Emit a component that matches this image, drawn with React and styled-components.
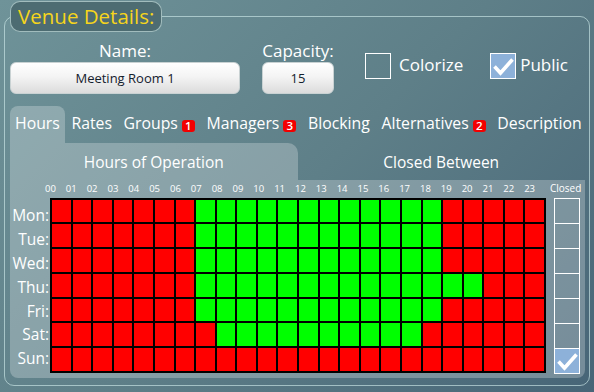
import React from "react";
import styled, { createGlobalStyle } from "styled-components";

const GlobalStyle = createGlobalStyle`
  html, body { margin: 0; padding: 0; height: 100%; }
  body {
    background: linear-gradient(135deg, #6f9399 0%, #5e7f88 50%, #476577 100%);
    font-family: "Open Sans", "Noto Sans", sans-serif;
    color: #fff;
    overflow: hidden;
  }
  #root { height: 100%; }
`;

const OVERLAY = "rgba(255,255,255,0.25)";

const Frame = styled.fieldset`
  margin: 1px 4px 0;
  padding: 8px 4px 7px 5px;
  border: 1px solid rgba(205, 232, 232, 0.65);
  border-radius: 10px;
  min-inline-size: 0;
`;

const Legend = styled.legend`
  margin: 0;
  padding: 0 7px;
  height: 31px;
  box-sizing: border-box;
  line-height: 29px;
  font-size: 20.5px;
  color: #f6d51c;
  background: #4d6c72;
  border: 1px solid rgba(190, 215, 215, 0.75);
  border-radius: 10px;
`;

const HeaderRow = styled.div`
  display: flex;
  align-items: flex-start;
`;

const FieldGroup = styled.div`
  display: flex;
  flex-direction: column;
  align-items: center;
  width: ${(p) => p.$width}px;
  margin-left: ${(p) => p.$offset || 0}px;
`;

const FieldLabel = styled.div`
  font-size: 17px;
  line-height: 22px;
  white-space: nowrap;
`;

const TextInput = styled.div`
  box-sizing: border-box;
  width: 100%;
  height: 32px;
  border-radius: 6px;
  border: 1px solid #c9d2d3;
  background: linear-gradient(#ffffff 0%, #f4f4f4 45%, #dcdcdc 100%);
  color: #13202c;
  font-size: 13px;
  display: flex;
  align-items: center;
  justify-content: center;
`;

const CheckField = styled.div`
  display: flex;
  align-items: center;
  margin-top: 13px;
  margin-left: ${(p) => p.$offset}px;
`;

const CheckBox = styled.div`
  box-sizing: border-box;
  width: 26px;
  height: 26px;
  border: 1px solid #ffffff;
  background: ${(p) => (p.$checked ? "#8db1d9" : "transparent")};
  display: flex;
  align-items: center;
  justify-content: center;
`;

const CheckText = styled.span`
  font-size: 17px;
  line-height: 22px;
  margin-left: ${(p) => p.$gap}px;
  margin-top: -3px;
`;

const Tabs = styled.div`
  display: flex;
  margin-top: 12px;
  height: 37px;
`;

const Tab = styled.div`
  display: flex;
  align-items: flex-start;
  padding: 0 5px;
  margin-right: 1.6px;
  font-size: 15.8px;
  line-height: 34px;
  white-space: nowrap;
  border-radius: 8px 8px 0 0;
  background: ${(p) => (p.$active ? OVERLAY : "transparent")};
`;

const Badge = styled.span`
  display: inline-block;
  margin-left: 4px;
  margin-top: 14px;
  width: 13px;
  height: 12px;
  line-height: 12px;
  border-radius: 3px;
  background: #f20000;
  color: #fff;
  font-size: 11.5px;
  font-weight: 600;
  text-align: center;
`;

const Panel = styled.div`
  width: 575px;
`;

const SubTabs = styled.div`
  display: flex;
  height: 37px;
`;

const SubTab = styled.div`
  flex: 1;
  display: flex;
  align-items: center;
  justify-content: center;
  font-size: 15.5px;
  border-radius: 0 10px 0 0;
  background: ${(p) => (p.$active ? OVERLAY : "transparent")};
`;

const GridArea = styled.div`
  display: flex;
  align-items: flex-start;
  padding-bottom: 4px;
  background: ${OVERLAY};
  border-radius: 0 0 8px 8px;
`;

const DayCol = styled.div`
  width: 40px;
  box-sizing: border-box;
  padding-top: 24px;
  padding-right: 1px;
  display: flex;
  flex-direction: column;
  align-items: flex-end;
`;

const DayLabel = styled.div`
  height: 23.9px;
  line-height: 23.9px;
  font-size: 15.5px;
`;

const ScheduleCol = styled.div`
  width: 496px;
`;

const HourRow = styled.div`
  display: grid;
  grid-template-columns: repeat(24, 1fr);
  width: 500px;
  margin-left: -10px;
  height: 17.7px;
`;

const HourLabel = styled.div`
  font-size: 9.5px;
  line-height: 17px;
  text-align: center;
`;

const Grid = styled.div`
  display: grid;
  grid-template-columns: repeat(24, 1fr);
  grid-template-rows: repeat(7, 1fr);
  gap: 2px;
  padding: 2px;
  height: 175px;
  box-sizing: border-box;
  background: #000;
`;

const Cell = styled.div`
  background: ${(p) => (p.$open ? "#00ff00" : "#ff0000")};
`;

const ClosedCol = styled.div`
  width: 30px;
  margin-left: 4px;
  display: flex;
  flex-direction: column;
  align-items: flex-end;
`;

const ClosedLabel = styled.div`
  width: 30px;
  height: 18px;
  line-height: 17px;
  font-size: 10px;
  text-align: center;
`;

const ClosedBox = styled.div`
  box-sizing: border-box;
  width: 26px;
  height: 26px;
  border: 1px solid #ffffff;
  margin-top: ${(p) => (p.$first ? 0 : -1)}px;
  background: ${(p) => (p.$checked ? "#8db1d9" : "transparent")};
  display: flex;
  align-items: center;
  justify-content: center;
`;

const Check = () => (
  <svg width="24" height="24" viewBox="0 0 24 24">
    <polyline
      points="3.5,12.5 9.5,19 21.5,5.5"
      fill="none"
      stroke="#ffffff"
      strokeWidth="3.6"
      strokeLinejoin="miter"
      strokeLinecap="butt"
    />
  </svg>
);

const days = ["Mon:", "Tue:", "Wed:", "Thu:", "Fri:", "Sat:", "Sun:"];
const schedule = [[7, 18], [7, 18], [7, 18], [7, 20], [7, 18], [8, 17], null];
const closed = [false, false, false, false, false, false, true];
const hours = Array.from({ length: 24 }, (_, i) => String(i).padStart(2, "0"));

const tabs = [
  { label: "Hours", active: true },
  { label: "Rates" },
  { label: "Groups", badge: 1 },
  { label: "Managers", badge: 3 },
  { label: "Blocking" },
  { label: "Alternatives", badge: 2 },
  { label: "Description" },
];

export default function App() {
  return (
    <>
      <GlobalStyle />
      <Frame>
        <Legend>Venue Details:</Legend>
        <HeaderRow>
          <FieldGroup $width={230}>
            <FieldLabel>Name:</FieldLabel>
            <TextInput>Meeting Room 1</TextInput>
          </FieldGroup>
          <FieldGroup $width={72} $offset={22}>
            <FieldLabel>Capacity:</FieldLabel>
            <TextInput>15</TextInput>
          </FieldGroup>
          <CheckField $offset={31}>
            <CheckBox />
            <CheckText $gap={8}>Colorize</CheckText>
          </CheckField>
          <CheckField $offset={27}>
            <CheckBox $checked>
              <Check />
            </CheckBox>
            <CheckText $gap={4}>Public</CheckText>
          </CheckField>
        </HeaderRow>
        <Tabs>
          {tabs.map((t) => (
            <Tab key={t.label} $active={t.active}>
              {t.label}
              {t.badge ? <Badge>{t.badge}</Badge> : null}
            </Tab>
          ))}
        </Tabs>
        <Panel>
          <SubTabs>
            <SubTab $active>Hours of Operation</SubTab>
            <SubTab>Closed Between</SubTab>
          </SubTabs>
          <GridArea>
            <DayCol>
              {days.map((d) => (
                <DayLabel key={d}>{d}</DayLabel>
              ))}
            </DayCol>
            <ScheduleCol>
              <HourRow>
                {hours.map((h) => (
                  <HourLabel key={h}>{h}</HourLabel>
                ))}
              </HourRow>
              <Grid>
                {schedule.map((range, r) =>
                  hours.map((_, c) => (
                    <Cell
                      key={`${r}-${c}`}
                      $open={range && c >= range[0] && c <= range[1]}
                    />
                  ))
                )}
              </Grid>
            </ScheduleCol>
            <ClosedCol>
              <ClosedLabel>Closed</ClosedLabel>
              {closed.map((c, i) => (
                <ClosedBox key={i} $first={i === 0} $checked={c}>
                  {c ? <Check /> : null}
                </ClosedBox>
              ))}
            </ClosedCol>
          </GridArea>
        </Panel>
      </Frame>
    </>
  );
}
